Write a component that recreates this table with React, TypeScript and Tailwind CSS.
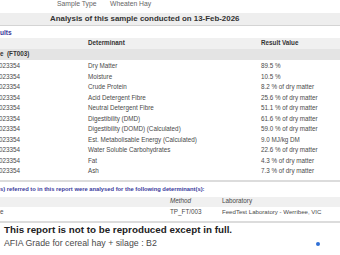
import React from 'react';

const results = [
  { name: 'Dry Matter', value: '89.5 %' },
  { name: 'Moisture', value: '10.5 %' },
  { name: 'Crude Protein', value: '8.2 % of dry matter' },
  { name: 'Acid Detergent Fibre', value: '25.6 % of dry matter' },
  { name: 'Neutral Detergent Fibre', value: '51.1 % of dry matter' },
  { name: 'Digestibility (DMD)', value: '61.6 % of dry matter' },
  { name: 'Digestibility (DOMD) (Calculated)', value: '59.0 % of dry matter' },
  { name: 'Est. Metabolisable Energy (Calculated)', value: '9.0 MJ/kg DM' },
  { name: 'Water Soluble Carbohydrates', value: '22.6 % of dry matter' },
  { name: 'Fat', value: '4.3 % of dry matter' },
  { name: 'Ash', value: '7.3 % of dry matter' }
];

const App = () => {
  return (
    <div
      className="w-[340px] h-[255px] overflow-hidden bg-white text-[#4a4a4a] text-[6.3px] leading-none"
      style={{ fontFamily: '"Liberation Sans", Arial, sans-serif' }}
    >
      {/* Sample details */}
      <div className="flex h-[13px] items-start pt-[1px] pl-[57px] text-[#666] text-[6.8px]">
        <span className="w-[53px]">Sample Type</span>
        <span>Wheaten Hay</span>
      </div>

      <div className="flex h-[13px] items-center bg-[#eeeeee] border-b border-[#d4d4d4] pl-[50px] font-bold text-[#333] text-[7.9px]">
        Analysis of this sample conducted on 13-Feb-2026
      </div>

      {/* Results */}
      <div className="mt-[1px] flex h-[11px] items-center pt-[1px] font-bold text-[#3a3a9c] text-[6.6px]">ults</div>

      <div className="grid grid-cols-[88px_173px_1fr] h-[11px] items-center bg-[#f0f0f0] font-bold text-[#333]">
        <span></span>
        <span>Determinant</span>
        <span>Result Value</span>
      </div>
      <div className="flex h-[11px] items-center bg-[#e4e4e4] font-bold text-[#333]">e&nbsp;&nbsp;(FT003)</div>

      <div className="pt-[1px] pb-[3px] border-b-2 border-[#dcdcdc]">
        {results.map((r) => (
          <div key={r.name} className="grid grid-cols-[88px_173px_1fr] h-[10.5px] items-center">
            <span className="-ml-[1px]">023354</span>
            <span>{r.name}</span>
            <span>{r.value}</span>
          </div>
        ))}
      </div>

      {/* Methods */}
      <div className="mt-[3px] flex h-[11px] items-center font-bold text-[#3a3a9c] text-[5.8px]">
        s) referred to in this report were analysed for the following determinant(s):
      </div>
      <div className="mt-[1px] grid grid-cols-[170px_52px_1fr] h-[10px] items-center bg-[#f0f0f0]">
        <span></span>
        <span className="italic">Method</span>
        <span>Laboratory</span>
      </div>
      <div className="pb-[2px] border-b-2 border-[#dcdcdc]">
        <div className="grid grid-cols-[170px_52px_1fr] h-[12px] items-center">
          <span>e</span>
          <span>TP_FT/003</span>
          <span className="whitespace-nowrap text-[6.1px]">FeedTest Laboratory - Werribee, VIC</span>
        </div>
      </div>

      <div className="pl-[4px] h-[14px] flex items-center font-bold text-[#222] text-[9.8px]">
        This report is not to be reproduced except in full.
      </div>
      <div className="flex h-[14px] items-center justify-between pl-[4px] pr-[20px] text-[8.8px]">
        <span>AFIA Grade for cereal hay + silage : B2</span>
        <span className="w-[4px] h-[4px] rounded-full bg-[#2f6fd6]"></span>
      </div>
    </div>
  );
};

export default App;
